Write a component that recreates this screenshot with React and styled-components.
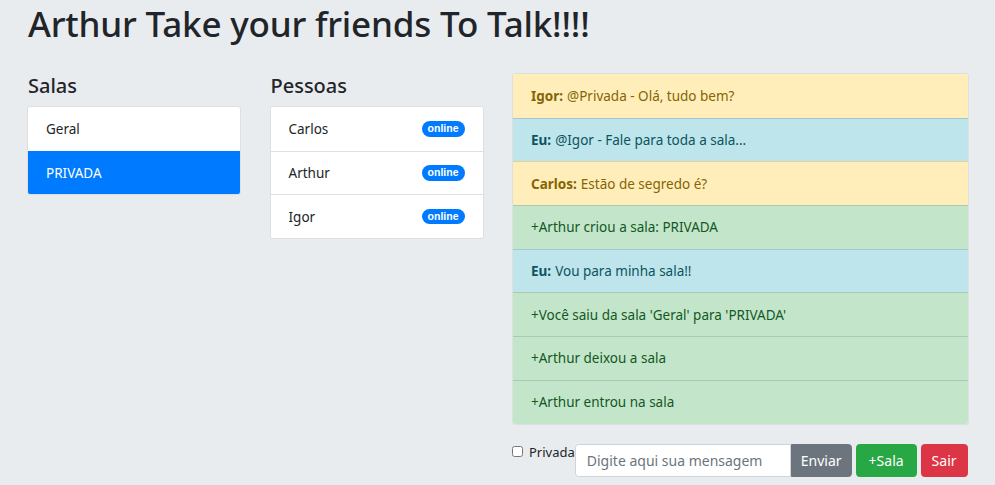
import React from "react";
import styled, { createGlobalStyle, css } from "styled-components";

const Global = createGlobalStyle`
  html, body { margin: 0; padding: 0; }
  body {
    background: #e9ecef;
    font-family: "Noto Sans", "Open Sans", sans-serif;
    font-size: 14.4px;
    line-height: 1.5;
    color: #212529;
  }
  * { box-sizing: border-box; }
`;

const Page = styled.div`
  padding: 0 26px 0 27px;
`;

const Title = styled.h1`
  margin: 0 0 0 1px;
  padding-top: 3px;
  font-size: 35px;
  font-weight: 500;
  line-height: 1.2;
  letter-spacing: -0.2px;
  color: #212529;
`;

const Grid = styled.div`
  display: grid;
  grid-template-columns: 214px 214px 457px;
  column-gap: 28.5px;
  margin-top: 26px;
  align-items: start;
`;

const Column = styled.div`
  display: flex;
  flex-direction: column;
`;

const Heading = styled.h4`
  margin: 3px 0 8px 1px;
  font-size: 20px;
  font-weight: 500;
  line-height: 1.2;
  color: #212529;
`;

const List = styled.ul`
  list-style: none;
  margin: 0;
  padding: 0;
  border-radius: 3.6px;
  overflow: hidden;
  border: 1px solid rgba(0, 0, 0, 0.125);
  background: #fff;
`;

const variants = {
  warning: css`background: #ffeeba; color: #856404;`,
  info: css`background: #bee5eb; color: #0c5460;`,
  success: css`background: #c3e6cb; color: #155724;`,
  active: css`background: #007bff; color: #fff; border-color: #007bff;`,
  plain: css`background: #fff; color: #212529;`,
};

const Item = styled.li`
  display: flex;
  align-items: center;
  justify-content: space-between;
  height: 43.7px;
  padding: 0 18px;
  font-size: 13.5px;
  border-top: 1px solid rgba(0, 0, 0, 0.125);
  &:first-child { border-top: none; }
  ${(p) => variants[p.$v || "plain"]}
`;

const Badge = styled.span`
  display: inline-block;
  background: #007bff;
  color: #fff;
  font-size: 10.5px;
  font-weight: 700;
  line-height: 1;
  padding: 2px 6px 3px;
  border-radius: 10px;
  font-family: "Liberation Sans", Arial, sans-serif;
`;

const ChatColumn = styled.div`
  display: flex;
  flex-direction: column;
  margin-top: 2px;
`;

const Name = styled.b`
  font-weight: 700;
  margin-right: 4px;
`;

const Form = styled.div`
  display: flex;
  align-items: flex-start;
  margin-top: 19px;
`;

const CheckLabel = styled.label`
  display: flex;
  align-items: center;
  gap: 6px;
  font-size: 13px;
  color: #212529;
  line-height: 1.3;
`;

const Check = styled.input`
  width: 11px;
  height: 11px;
  margin: 0;
`;

const Input = styled.input`
  width: 216px;
  height: 33px;
  padding: 0 11px;
  font-family: inherit;
  font-size: 14px;
  color: #495057;
  border: 1px solid #ced4da;
  border-radius: 3.6px 0 0 3.6px;
  background: #fff;
  outline: none;
  &::placeholder { color: #6c757d; }
`;

const btnColors = {
  secondary: "#6c757d",
  success: "#28a745",
  danger: "#dc3545",
};

const Button = styled.button`
  height: 33px;
  padding: 0 ${(p) => p.$px || 10}px;
  margin-left: ${(p) => (p.$attached ? 0 : 4)}px;
  border: 1px solid ${(p) => btnColors[p.$c]};
  background: ${(p) => btnColors[p.$c]};
  color: #fff;
  font-family: inherit;
  font-size: 14px;
  border-radius: ${(p) => (p.$attached ? "0 3.6px 3.6px 0" : "3.6px")};
  cursor: pointer;
`;

const messages = [
  { v: "warning", name: "Igor:", text: "@Privada - Olá, tudo bem?" },
  { v: "info", name: "Eu:", text: "@Igor - Fale para toda a sala..." },
  { v: "warning", name: "Carlos:", text: "Estão de segredo é?" },
  { v: "success", text: "+Arthur criou a sala: PRIVADA" },
  { v: "info", name: "Eu:", text: "Vou para minha sala!!" },
  { v: "success", text: "+Você saiu da sala 'Geral' para 'PRIVADA'" },
  { v: "success", text: "+Arthur deixou a sala" },
  { v: "success", text: "+Arthur entrou na sala" },
];

export default function App() {
  return (
    <Page>
      <Global />
      <Title>Arthur Take your friends To Talk!!!!</Title>
      <Grid>
        <Column>
          <Heading>Salas</Heading>
          <List>
            <Item>Geral</Item>
            <Item $v="active">PRIVADA</Item>
          </List>
        </Column>
        <Column>
          <Heading>Pessoas</Heading>
          <List>
            {["Carlos", "Arthur", "Igor"].map((n) => (
              <Item key={n}>
                {n}
                <Badge>online</Badge>
              </Item>
            ))}
          </List>
        </Column>
        <ChatColumn>
          <List>
            {messages.map((m, i) => (
              <Item key={i} $v={m.v}>
                <span>
                  {m.name && <Name>{m.name}</Name>}
                  {m.text}
                </span>
              </Item>
            ))}
          </List>
          <Form>
            <CheckLabel>
              <Check type="checkbox" />
              Privada
            </CheckLabel>
            <Input placeholder="Digite aqui sua mensagem" />
            <Button $c="secondary" $attached $px={9}>Enviar</Button>
            <Button $c="success" $px={12}>+Sala</Button>
            <Button $c="danger">Sair</Button>
          </Form>
        </ChatColumn>
      </Grid>
    </Page>
  );
}
